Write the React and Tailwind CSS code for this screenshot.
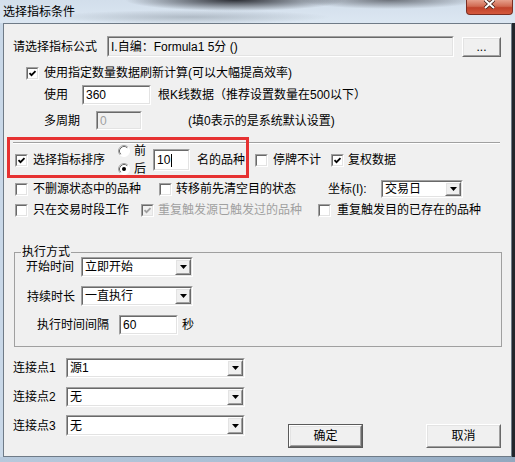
import React from "react";

function Sunken({ className = "", inner = "bg-white", children }) {
  return (
    <div className={"border border-t-[#a0a0a0] border-l-[#a0a0a0] border-b-white border-r-white " + className}>
      <div className={"h-full flex items-center border border-t-[#696969] border-l-[#696969] border-b-[#e3e3e3] border-r-[#e3e3e3] " + inner}>
        {children}
      </div>
    </div>
  );
}

function Raised({ className = "", children }) {
  return (
    <div className={"border border-t-white border-l-white border-b-[#696969] border-r-[#696969] " + className}>
      <div className="h-full flex items-center justify-center border border-t-[#e3e3e3] border-l-[#e3e3e3] border-b-[#a0a0a0] border-r-[#a0a0a0] bg-[#f0f0f0]">
        {children}
      </div>
    </div>
  );
}

function Combo({ className = "", children }) {
  return (
    <Sunken className={className} inner="bg-white">
      <span className="flex-1 pl-[2px]">{children}</span>
      <Raised className="w-[16px] h-full">
        <svg width="7" height="4" viewBox="0 0 7 4">
          <path d="M0 0H7L3.5 4Z" fill="#000" />
        </svg>
      </Raised>
    </Sunken>
  );
}

function Check({ checked, disabled }) {
  return (
    <Sunken
      className="w-[13px] h-[13px] shrink-0"
      inner={disabled ? "bg-[#f0f0f0] justify-center" : "bg-white justify-center"}
    >
      {checked && (
        <svg width="9" height="9" viewBox="0 0 9 9">
          <path
            d="M1.5 4.2L3.5 6.2L7.5 2.2"
            fill="none"
            stroke={disabled ? "#a0a0a0" : "#000"}
            strokeWidth="1.8"
          />
        </svg>
      )}
    </Sunken>
  );
}

function Radio({ checked }) {
  return (
    <svg width="12" height="12" viewBox="0 0 12 12" className="shrink-0">
      <circle cx="6" cy="6" r="5.5" fill="#fff" stroke="#fff" />
      <path d="M2.11 9.89A5.5 5.5 0 0 1 9.89 2.11" fill="none" stroke="#a0a0a0" />
      <path d="M2.82 9.18A4.5 4.5 0 0 1 9.18 2.82" fill="none" stroke="#696969" />
      {checked && <circle cx="6" cy="6" r="2" fill="#000" />}
    </svg>
  );
}

function TitleBar() {
  return (
    <div className="h-[23px] flex items-center bg-[image:radial-gradient(ellipse_110px_11px_at_235px_0px,rgba(15,15,20,0.85),transparent),radial-gradient(ellipse_90px_9px_at_390px_0px,rgba(25,25,30,0.55),transparent),radial-gradient(ellipse_140px_7px_at_190px_17px,rgba(80,90,100,0.3),transparent),linear-gradient(to_bottom,#d2deeb,#dce7f2)]">
      <span className="ml-[3px]">选择指标条件</span>
      <div className="self-start ml-auto mr-[2px] w-[47px] h-[15px] rounded-b-[4px] border border-t-0 border-[#7a2e22] bg-[image:linear-gradient(to_bottom,#e6a08c,#d16a52_45%,#c0432b_55%,#d4593d)] flex justify-center">
        <svg width="13" height="10" viewBox="0 0 13 10" className="-mt-[1px]">
          <path d="M2 1L11 9M11 1L2 9" stroke="#3a1c17" strokeWidth="3.6" />
          <path d="M2 1L11 9M11 1L2 9" stroke="#fff" strokeWidth="2" />
        </svg>
      </div>
    </div>
  );
}

export default function App() {
  return (
    <div className="w-[515px] h-[462px] overflow-hidden flex flex-col bg-[#c3d3e4] text-[12px] leading-none text-black font-['Liberation_Sans','Noto_Sans_CJK_SC',sans-serif]">
      <TitleBar />
      <div className="flex h-[434px]">
        <div className="w-[3px] bg-[#c9d8e8]" />
        <div className="relative w-[509px] border border-[#6f7b87] bg-[#f0f0f0] flex flex-col">
          {/* formula */}
          <div className="mt-[12px] h-[21px] flex items-center pl-[9px]">
            <span className="w-[94px]">请选择指标公式</span>
            <Sunken className="w-[347px] h-[21px]" inner="bg-[#f0f0f0] pl-[2px]">
              I.自编：Formula1 5分 ()
            </Sunken>
            <Raised className="ml-[8px] w-[39px] h-[20px]">...</Raised>
          </div>

          <div className="mt-[7px] h-[18px] flex items-center pl-[22px]">
            <Check checked />
            <span className="ml-[5px]">使用指定数量数据刷新计算(可以大幅提高效率)</span>
          </div>

          <div className="mt-[3px] h-[20px] flex items-center pl-[40px]">
            <span className="w-[38px]">使用</span>
            <Sunken className="w-[69px] h-[20px]" inner="bg-white pl-[2px]">360</Sunken>
            <span className="ml-[7px]">根K线数据（推荐设置数量在500以下）</span>
          </div>

          <div className="mt-[6px] h-[19px] flex items-center pl-[40px]">
            <span className="w-[52px]">多周期</span>
            <Sunken className="w-[46px] h-[19px]" inner="bg-[#f0f0f0] text-[#a0a0a0] pl-[2px]">0</Sunken>
            <span className="ml-[46px]">(填0表示的是系统默认设置)</span>
          </div>

          <div className="mt-[12px] ml-[9px] w-[487px] border-t border-b border-t-[#a0a0a0] border-b-white" />

          {/* sort row */}
          <div className="mt-[1px] h-[30px] flex items-center pl-[11px]">
            <Check checked />
            <span className="ml-[5px]">选择指标排序</span>
            <div className="ml-[13px] flex flex-col gap-[1px]">
              <div className="h-[17px] flex items-center">
                <Radio />
                <span className="ml-[4px]">前</span>
              </div>
              <div className="h-[17px] flex items-center">
                <Radio checked />
                <span className="ml-[4px]">后</span>
              </div>
            </div>
            <Sunken className="ml-[7px] w-[37px] h-[22px]" inner="bg-white pl-[2px]">
              10<span className="ml-px w-px h-[13px] bg-black" />
            </Sunken>
            <span className="ml-[7px]">名的品种</span>
            <div className="ml-[10px]"><Check /></div>
            <span className="ml-[5px]">停牌不计</span>
            <div className="ml-[10px]"><Check checked /></div>
            <span className="ml-[4px]">复权数据</span>
          </div>

          <div className="mt-[5px] h-[18px] flex items-center pl-[11px]">
            <Check />
            <span className="ml-[5px]">不删源状态中的品种</span>
            <div className="ml-[18px]"><Check /></div>
            <span className="ml-[4px]">转移前先清空目的状态</span>
            <span className="ml-[32px] w-[53px]">坐标(I):</span>
            <Combo className="w-[82px] h-[18px]">交易日</Combo>
          </div>

          <div className="mt-[3px] h-[18px] flex items-center pl-[11px]">
            <Check />
            <span className="ml-[5px]">只在交易时段工作</span>
            <div className="ml-[12px]"><Check checked disabled /></div>
            <span className="ml-[4px] text-[#a0a0a0]">重复触发源已触发过的品种</span>
            <div className="ml-[16px]"><Check /></div>
            <span className="ml-[6px]">重复触发目的已存在的品种</span>
          </div>

          {/* group */}
          <fieldset className="mt-[26px] ml-[10px] w-[488px] border border-[#a0a0a0] pb-[11px]">
            <legend className="ml-[6px] px-[1px] leading-[14px]">执行方式</legend>
            <div className="-mt-[2px] h-[20px] flex items-center pl-[11px]">
              <span className="w-[55px]">开始时间</span>
              <Combo className="w-[112px] h-[20px]">立即开始</Combo>
            </div>
            <div className="mt-[9px] h-[20px] flex items-center pl-[11px]">
              <span className="w-[55px] pl-[1px] pt-[2px]">持续时长</span>
              <Combo className="w-[112px] h-[20px]">一直执行</Combo>
            </div>
            <div className="mt-[9px] h-[20px] flex items-center pl-[22px]">
              <span className="w-[82px]">执行时间间隔</span>
              <Sunken className="w-[59px] h-[20px]" inner="bg-white pl-[2px]">60</Sunken>
              <span className="ml-[4px]">秒</span>
            </div>
          </fieldset>

          {/* links + buttons */}
          <div className="flex items-start">
            <div className="flex flex-col pl-[9px]">
              <div className="mt-[11px] h-[20px] flex items-center">
                <span className="w-[53px]">连接点1</span>
                <Combo className="w-[179px] h-[20px]">源1</Combo>
              </div>
              <div className="mt-[9px] h-[20px] flex items-center">
                <span className="w-[53px]">连接点2</span>
                <Combo className="w-[179px] h-[20px]">无</Combo>
              </div>
              <div className="mt-[8px] h-[21px] flex items-center">
                <span className="w-[53px]">连接点3</span>
                <Combo className="w-[179px] h-[21px]">无</Combo>
              </div>
            </div>
            <div className="mt-[77px] ml-[43px] flex">
              <div className="w-[75px] h-[24px] border border-[#5a5a5a]">
                <Raised className="h-full">确定</Raised>
              </div>
              <Raised className="ml-[63px] w-[75px] h-[24px]">取消</Raised>
            </div>
          </div>

          {/* annotation box */}
          <div className="absolute left-[3px] top-[113px] w-[242px] h-[41px] border-[3px] border-[#e63232]" />
        </div>
        <div className="w-[3px] bg-[#22262c]" />
      </div>
      <div className="h-[5px] bg-[image:linear-gradient(to_right,#b7c9dc,#a9bed4_50%,#92a8bf)]" />
    </div>
  );
}
